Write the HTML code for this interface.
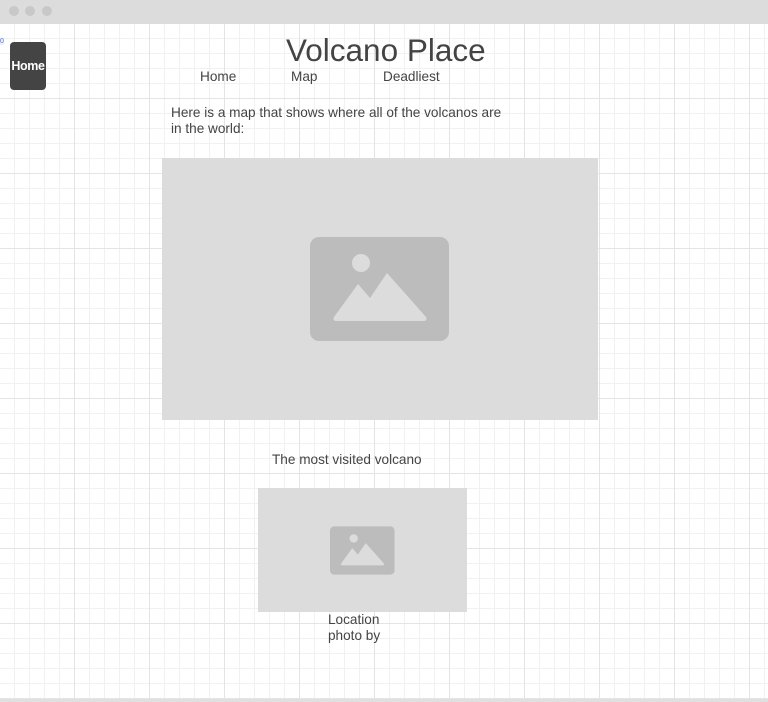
<!DOCTYPE html>
<html><head><style>
html,body{margin:0;padding:0}
body{width:768px;height:702px;position:relative;overflow:hidden;background:#fff;font-family:"Liberation Sans",sans-serif;color:#444}
.grid{position:absolute;left:0;top:24px;width:768px;height:676px;
background-image:
linear-gradient(to right,#e4e4e4 1px,transparent 1px),
linear-gradient(to bottom,#e4e4e4 1px,transparent 1px),
linear-gradient(to right,#f1f1f1 1px,transparent 1px),
linear-gradient(to bottom,#f1f1f1 1px,transparent 1px);
background-size:75px 75px,75px 75px,15px 15px,15px 15px;
background-position:-1px -1px,-1px -1px,-1px -1px,-1px -1px}
.bar{position:absolute;left:0;top:0;width:768px;height:24px;background:#dcdcdc}
.dot{position:absolute;top:6px;width:10px;height:10px;border-radius:50%;background:#c8c8c8}
.bottom{position:absolute;left:0;top:699px;width:768px;height:3px;background:#e0e0e0}
.abs{position:absolute}
.img{position:absolute;background:#dcdcdc}
.t{font-size:13.6px}
</style></head><body>
<div class="bar"><div class="dot" style="left:9px"></div><div class="dot" style="left:25px"></div><div class="dot" style="left:42px"></div></div>
<div class="grid"></div>
<div class="bottom"></div>
<div class="abs" style="left:0;top:38px;font-size:7px;color:#4a7fd0;background:#eef">0</div>
<div class="abs" style="left:10px;top:42px;width:36px;height:48px;background:#444;border-radius:4px;color:#fff;font-size:12.5px;font-weight:bold;line-height:49px;text-align:center;letter-spacing:-0.4px">Home</div>
<div class="abs" style="left:286px;top:32px;font-size:31.5px;color:#444">Volcano Place</div>
<div class="abs t" style="left:200px;top:69px">Home</div>
<div class="abs t" style="left:291px;top:69px">Map</div>
<div class="abs t" style="left:383px;top:69px">Deadliest</div>
<div class="abs t" style="left:171px;top:105px;line-height:16px;width:340px">Here is a map that shows where all of the volcanos are in the world:</div>
<div class="img" style="left:162px;top:158px;width:436px;height:262px">
<svg class="abs" style="left:148px;top:79px" width="140" height="104" viewBox="0 0 140 104"><rect width="139" height="104" rx="9" fill="#bcbcbc"/><circle cx="51" cy="26" r="9" fill="#dcdcdc"/><path d="M24 80 L48 47 L60 61 L77 36 L116 80 Q118 84 113 84 L27 84 Q22 84 24 80Z" fill="#dcdcdc"/></svg>
</div>
<div class="abs t" style="left:272px;top:452px">The most visited volcano</div>
<div class="img" style="left:258px;top:488px;width:209px;height:124px">
<svg class="abs" style="left:72px;top:38px" width="65" height="49" viewBox="0 0 140 104"><rect width="139" height="104" rx="9" fill="#bcbcbc"/><circle cx="51" cy="26" r="9" fill="#dcdcdc"/><path d="M24 80 L48 47 L60 61 L77 36 L116 80 Q118 84 113 84 L27 84 Q22 84 24 80Z" fill="#dcdcdc"/></svg>
</div>
<div class="abs t" style="left:328px;top:612px;line-height:16px">Location<br>photo by</div>
</body></html>
